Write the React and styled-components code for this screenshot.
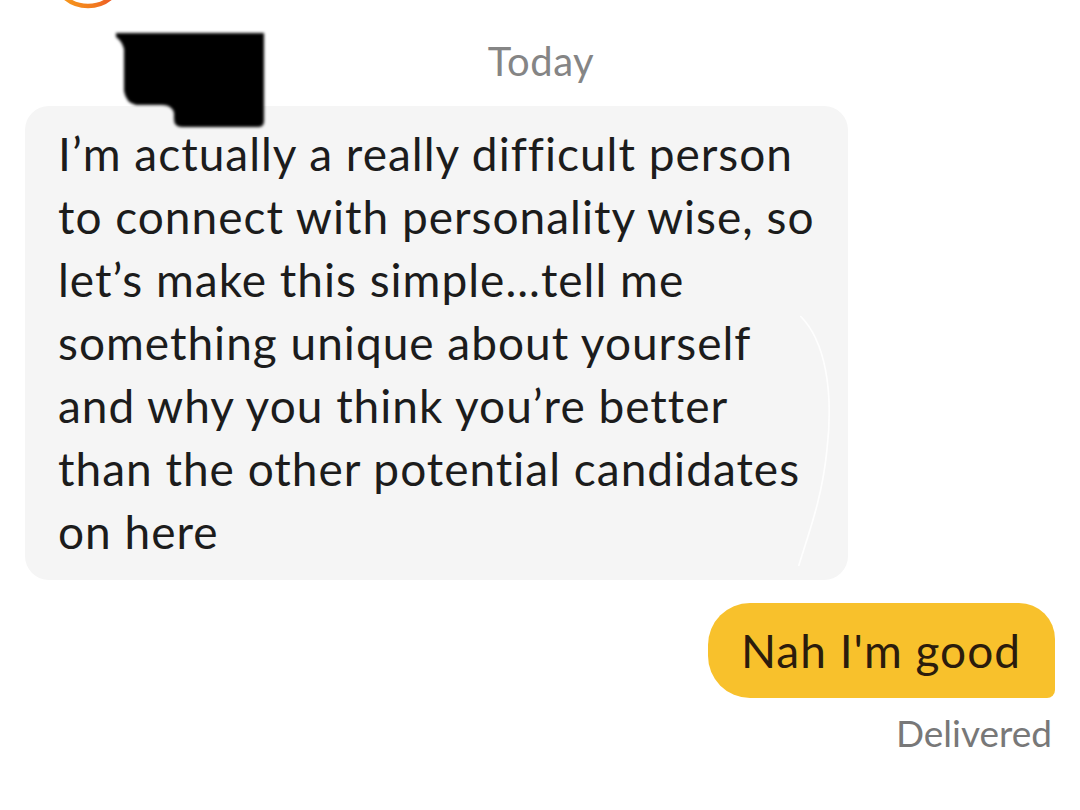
import React from 'react';
import styled, {createGlobalStyle} from 'styled-components';

const GlobalStyle = createGlobalStyle`
  html, body {
    margin: 0;
    padding: 0;
    background: #ffffff;
  }
  body {
    font-family: 'Lato', 'Liberation Sans', sans-serif;
  }
`;

const lines = [
  'I’m actually a really difficult person',
  'to connect with personality wise, so',
  'let’s make this simple...tell me',
  'something unique about yourself',
  'and why you think you’re better',
  'than the other potential candidates',
  'on here',
];

function Avatar() {
  return (
    <AvatarRing viewBox='0 0 80 80'>
      <defs>
        <linearGradient id='ring' x1='0' y1='0' x2='1' y2='0'>
          <stop offset='0' stopColor='#f7a21b' />
          <stop offset='0.6' stopColor='#f2791f' />
          <stop offset='1' stopColor='#e8432a' />
        </linearGradient>
      </defs>
      <circle cx='40' cy='40' r='36' fill='none' stroke='url(#ring)' strokeWidth='4.5' />
    </AvatarRing>
  );
}

function Redaction() {
  return (
    <RedactionMark viewBox='0 0 152 96'>
      <path
        d='M2 0 H150 V88 Q150 94 144 94 H68 Q60 94 60 86 V80 Q58 72 48 72 H22 Q12 70 10 58 V16 Q8 8 2 4 Z'
        fill='#000'
      />
    </RedactionMark>
  );
}

function Crease() {
  return (
    <CreaseLine viewBox='0 0 60 300'>
      <path
        d='M10 0 C40 30 50 90 42 160 C36 220 20 260 8 300'
        fill='none'
        stroke='#ffffff'
        strokeWidth='2'
        opacity='0.9'
      />
    </CreaseLine>
  );
}

export default function App() {
  return (
    <Page>
      <GlobalStyle />
      <TopStrip>
        <Avatar />
      </TopStrip>
      <DateLabel>Today</DateLabel>
      <Redaction />
      <IncomingRow>
        <IncomingBubble>
          {lines.map((line) => (
            <Line key={line}>{line}</Line>
          ))}
          <Crease />
        </IncomingBubble>
      </IncomingRow>
      <OutgoingRow>
        <OutgoingBubble>Nah I'm good</OutgoingBubble>
        <Status>Delivered</Status>
      </OutgoingRow>
    </Page>
  );
}

const Page = styled.div`
  position: relative;
  width: 1080px;
  height: 810px;
  overflow: hidden;
  background: #ffffff;
  display: flex;
  flex-direction: column;
`;

const TopStrip = styled.div`
  height: 10px;
  overflow: hidden;
  padding-left: 48px;
  display: flex;
  align-items: flex-end;
`;

const AvatarRing = styled.svg`
  width: 80px;
  height: 80px;
  flex-shrink: 0;
`;

const DateLabel = styled.div`
  margin-top: 29px;
  text-align: center;
  padding-left: 2px;
  font-size: 40px;
  letter-spacing: 0.5px;
  line-height: 44px;
  color: #858585;
`;

const RedactionMark = styled.svg`
  position: absolute;
  left: 114px;
  top: 33px;
  width: 152px;
  height: 96px;
  filter: blur(1.5px);
  z-index: 2;
`;

const IncomingRow = styled.div`
  margin-top: 23px;
  padding-left: 25px;
  display: flex;
`;

const IncomingBubble = styled.div`
  position: relative;
  width: 823px;
  box-sizing: border-box;
  padding: 16px 20px 17px 33px;
  background: #f5f5f5;
  border-radius: 24px;
  font-size: 46px;
  letter-spacing: 1px;
  line-height: 63px;
  color: #1c1c1c;
`;

const Line = styled.div`
  white-space: nowrap;
`;

const CreaseLine = styled.svg`
  position: absolute;
  right: 6px;
  top: 200px;
  width: 50px;
  height: 270px;
`;

const OutgoingRow = styled.div`
  margin-top: 23px;
  padding-right: 25px;
  display: flex;
  flex-direction: column;
  align-items: flex-end;
`;

const OutgoingBubble = styled.div`
  box-sizing: border-box;
  height: 95px;
  padding: 0 34px 0 33px;
  display: flex;
  align-items: center;
  background: #f8c12c;
  border-radius: 42px 36px 8px 42px;
  font-size: 46px;
  letter-spacing: 1px;
  color: #2b1c0c;
`;

const Status = styled.div`
  margin-top: 15px;
  padding-right: 3px;
  font-size: 37px;
  line-height: 40px;
  color: #787878;
`;
